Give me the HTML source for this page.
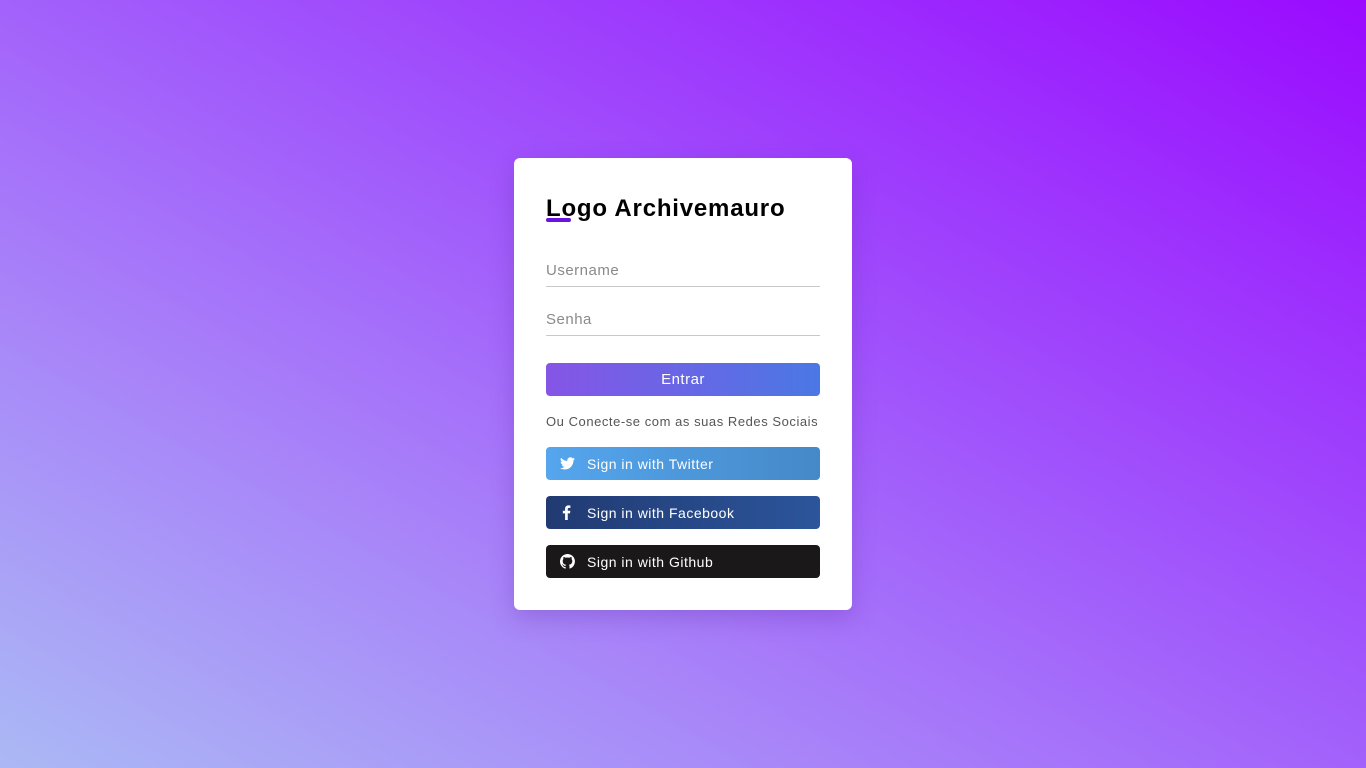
<!DOCTYPE html>
<html><head><style>
*{margin:0;padding:0;box-sizing:border-box}
body{width:1366px;height:768px;overflow:hidden;font-family:"Liberation Sans",sans-serif;background:linear-gradient(to top right,#abb9f5 0%,#a77cf9 35%,#a050fc 60%,#9a0aff 100%);position:relative}
.card{position:absolute;left:514px;top:158px;width:338px;height:452px;background:#fff;border-radius:6px;box-shadow:0 8px 24px rgba(80,30,150,.25)}
.abs{position:absolute}
h1{position:absolute;left:32px;top:37px;font-size:24px;font-weight:bold;color:#000;letter-spacing:0.8px}
.ul{left:32px;top:60px;width:25px;height:4px;border-radius:2px;background:#6a14e0}
.lab{font-size:15px;color:#8a8a8a;left:32px;letter-spacing:0.5px}
.line{left:32px;width:274px;height:1px;background:#c8c8c8}
.btn{left:32px;width:274px;height:33px;border-radius:4px;color:#fff;font-size:14px;display:flex;align-items:center;letter-spacing:0.5px}
.btn svg{position:absolute;left:14px}
.btn span{position:absolute;left:41px}
</style></head><body>
<div class="card">
<h1>Logo Archivemauro</h1>
<div class="abs ul"></div>
<div class="abs lab" style="top:104px">Username</div>
<div class="abs line" style="top:128px"></div>
<div class="abs lab" style="top:153px">Senha</div>
<div class="abs line" style="top:177px"></div>
<div class="abs btn" style="top:205px;background:linear-gradient(90deg,#8655e6,#4a78e4);justify-content:center;font-size:15px">Entrar</div>
<div class="abs" style="left:32px;top:256px;font-size:13px;color:#555;letter-spacing:0.55px">Ou Conecte-se com as suas Redes Sociais</div>
<div class="abs btn" style="top:289px;background:linear-gradient(90deg,#55a6ee,#4589c8)"><svg width="15" height="13" viewBox="0 0 24 20"><path fill="#fff" d="M24 2.4a10 10 0 0 1-2.8.8A5 5 0 0 0 23.3.5a10 10 0 0 1-3.1 1.2A4.9 4.9 0 0 0 11.8 6 14 14 0 0 1 1.7.9a4.9 4.9 0 0 0 1.5 6.6A4.9 4.9 0 0 1 1 6.9a4.9 4.9 0 0 0 3.9 4.8 5 5 0 0 1-2.2.1 4.900 4.900 0 0 0 4.6 3.4A9.9 9.9 0 0 1 0 17.3 14 14 0 0 0 7.5 19.5c9 0 14-7.5 14-14v-.6A10 10 0 0 0 24 2.4z"/></svg><span>Sign in with Twitter</span></div>
<div class="abs btn" style="top:338px;background:linear-gradient(90deg,#213a72,#2c559b)"><svg width="9" height="15" viewBox="0 0 10 18" style="left:16px"><path fill="#fff" d="M6.5 18V10h2.7l.4-3.1H6.5V4.9c0-.9.3-1.5 1.6-1.5H9.7V.6A22 22 0 0 0 7.3.5C5 .5 3.3 1.9 3.3 4.5v2.4H.6V10h2.7v8z"/></svg><span>Sign in with Facebook</span></div>
<div class="abs btn" style="top:387px;background:#1a1818"><svg width="15" height="15" viewBox="0 0 16 16"><path fill="#fff" d="M8 0a8 8 0 0 0-2.5 15.6c.4 0 .5-.2.5-.4v-1.5c-2.2.5-2.7-1-2.7-1-.4-.9-.9-1.2-.9-1.2-.7-.5.1-.5.1-.5.8.1 1.2.8 1.2.8.7 1.3 1.9.9 2.3.7.1-.5.3-.9.5-1.1-1.8-.2-3.600-.9-3.600-4 0-.9.3-1.600.8-2.100-.1-.2-.4-1 .1-2.100 0 0 .7-.2 2.200.8a7.500 7.500 0 0 1 4 0c1.500-1 2.200-.8 2.200-.8.4 1.100.2 1.900.1 2.100.5.6.8 1.300.8 2.100 0 3.100-1.900 3.800-3.600 4 .3.3.6.8.6 1.500v2.200c0 .2.100.5.600.4A8 8 0 0 0 8 0z"/></svg><span>Sign in with Github</span></div>
</div>
</body></html>
